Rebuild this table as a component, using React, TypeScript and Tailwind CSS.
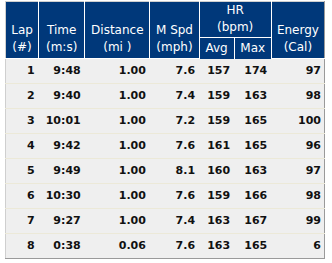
import React from "react";

const laps = [
  { lap: 1, time: "9:48", dist: "1.00", spd: "7.6", avg: 157, max: 174, cal: 97 },
  { lap: 2, time: "9:40", dist: "1.00", spd: "7.4", avg: 159, max: 163, cal: 98 },
  { lap: 3, time: "10:01", dist: "1.00", spd: "7.2", avg: 159, max: 165, cal: 100 },
  { lap: 4, time: "9:42", dist: "1.00", spd: "7.6", avg: 161, max: 165, cal: 96 },
  { lap: 5, time: "9:49", dist: "1.00", spd: "8.1", avg: 160, max: 163, cal: 97 },
  { lap: 6, time: "10:30", dist: "1.00", spd: "7.6", avg: 159, max: 166, cal: 98 },
  { lap: 7, time: "9:27", dist: "1.00", spd: "7.4", avg: 163, max: 167, cal: 99 },
  { lap: 8, time: "0:38", dist: "0.06", spd: "7.6", avg: 163, max: 165, cal: 6 },
];

const th = "border border-white px-0 align-bottom font-normal text-center pb-[2px]";
const td = "text-right pr-1 h-[25px] border-b border-[#ece9d8]";

export default function App() {
  return (
    <div className="bg-white w-[332px] h-[263px] pt-px pl-[5px]" style={{ fontFamily: "Verdana, 'DejaVu Sans', sans-serif" }}>
      <table className="table-fixed border-collapse w-[320px] border border-t-[#cfcfcf] border-l-[#cfcfcf] border-r-[#9a9a9a] border-b-[#9a9a9a] text-[11px]">
        <colgroup>
          <col className="w-[33px]" />
          <col className="w-[46px]" />
          <col className="w-[65px]" />
          <col className="w-[49px]" />
          <col className="w-[35px]" />
          <col className="w-[37px]" />
          <col className="w-[53px]" />
        </colgroup>
        <thead className="bg-[#00387a] text-white text-[12px] leading-[17px]">
          <tr>
            <th rowSpan={2} className={`${th} border-l-0 border-t-0`}>Lap<br />(#)</th>
            <th rowSpan={2} className={`${th} border-t-0`}>Time<br />(m:s)</th>
            <th rowSpan={2} className={`${th} border-t-0`}>Distance<br />(mi )</th>
            <th rowSpan={2} className={`${th} border-t-0`}>M Spd<br />(mph)</th>
            <th colSpan={2} className="border border-white border-t-0 font-normal text-center align-bottom h-[36px] pb-[1px] px-0">HR<br />(bpm)</th>
            <th rowSpan={2} className={`${th} border-r-0 border-t-0`}>Energy<br />(Cal)</th>
          </tr>
          <tr>
            <th className="border border-white border-b-0 font-normal text-center align-middle h-[21px] px-0">Avg</th>
            <th className="border border-white border-b-0 font-normal text-center align-middle h-[21px] px-0">Max</th>
          </tr>
        </thead>
        <tbody className="bg-[#efefef] font-bold text-[#111]">
          {laps.map((r, i) => (
            <tr key={r.lap} className={i === laps.length - 1 ? "[&>td]:border-b-0" : ""}>
              <td className={td}>{r.lap}</td>
              <td className={td}>{r.time}</td>
              <td className={td}>{r.dist}</td>
              <td className={td}>{r.spd}</td>
              <td className={td}>{r.avg}</td>
              <td className={td}>{r.max}</td>
              <td className={`${td} pr-[3px]`}>{r.cal}</td>
            </tr>
          ))}
        </tbody>
      </table>
    </div>
  );
}
